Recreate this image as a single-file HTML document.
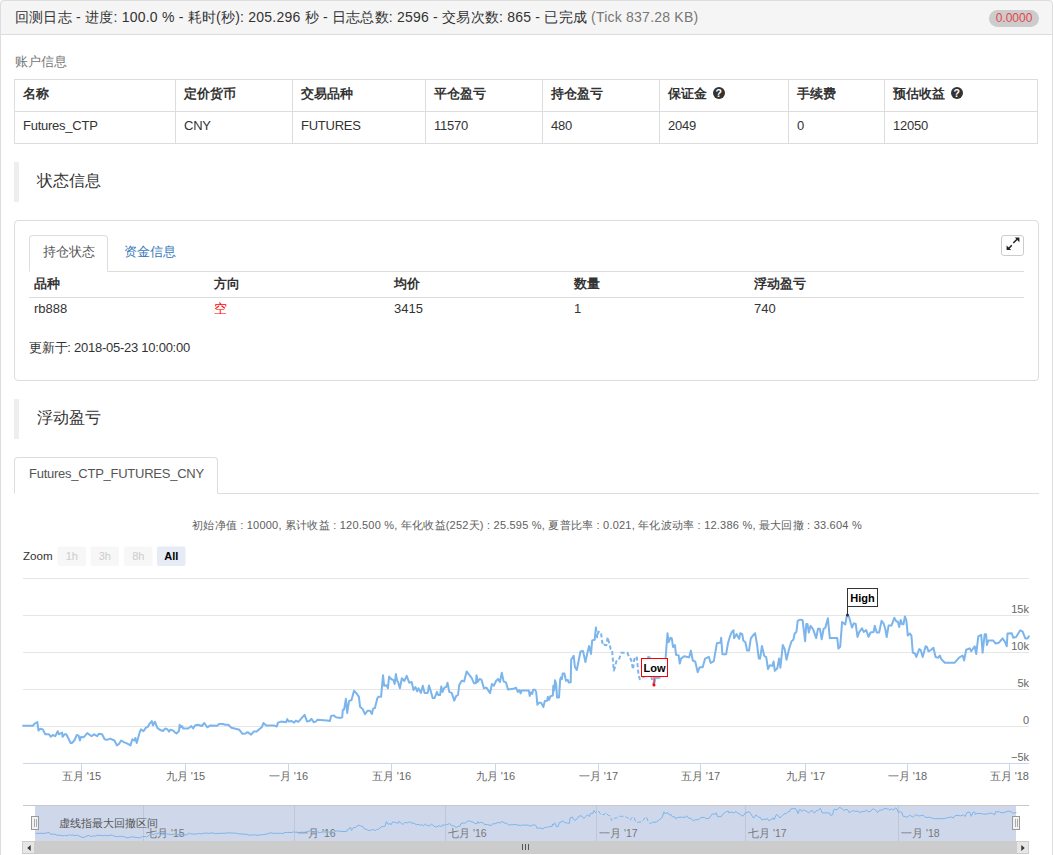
<!DOCTYPE html>
<html><head><meta charset="utf-8">
<style>
*{box-sizing:border-box;margin:0;padding:0}
html,body{width:1053px;height:855px;overflow:hidden;background:#fff}
body{font-family:"Liberation Sans",sans-serif;font-size:14px;color:#333;position:relative}
.a{position:absolute;white-space:nowrap}
#outer{position:absolute;left:0;top:0;width:1053px;height:900px;border:1px solid #ddd;border-radius:4px}
#head{position:absolute;left:0;top:0;width:1053px;height:35px;background:#f5f5f5;border:1px solid #ddd;border-radius:4px 4px 0 0}
.badge{position:absolute;left:989px;top:10px;width:50px;height:17px;border-radius:9px;background:#ccc;color:#e4464a;font-size:12px;line-height:17px;text-align:center}
.th{font-size:13px;line-height:16px;font-weight:bold;color:#333}
.td{font-size:13px;line-height:16px;color:#333;letter-spacing:-0.25px}
.bq{position:absolute;left:14px;width:5px;height:40px;background:#eee}
.h4{font-size:16px;color:#333}
#st{position:absolute;left:14px;top:220px;width:1025px;height:161px;border:1px solid #ddd;border-radius:4px}
.tab{position:absolute;border:1px solid #ddd;border-bottom-color:#fff;border-radius:4px 4px 0 0;background:#fff}
.ln{position:absolute;height:1px;background:#ddd}
.q{display:inline-block;width:12px;height:12px;border-radius:50%;background:#333;color:#fff;font-size:10.5px;line-height:12px;text-align:center;font-weight:bold;vertical-align:1.5px;margin-left:2px}
</style></head><body>
<div id="outer"></div>
<div id="head"></div>
<div class="a" style="left:15px;top:8px;font-size:14px;line-height:18px;color:#333;letter-spacing:0.22px">回测日志 - 进度: 100.0 % - 耗时(秒): 205.296 秒 - 日志总数: 2596 - 交易次数: 865 - 已完成 <span style="color:#777">(Tick 837.28 KB)</span></div>
<div class="badge">0.0000</div>

<div class="a" style="left:15px;top:53px;font-size:12.7px;line-height:18px;color:#777">账户信息</div>
<div class="a" style="left:14px;top:79px;width:1024px;height:65px;border:1px solid #ddd"></div>
<div class="ln" style="left:14px;top:111px;width:1024px"></div>
<div class="a" style="left:175px;top:79px;width:1px;height:65px;background:#ddd"></div>
<div class="a" style="left:292px;top:79px;width:1px;height:65px;background:#ddd"></div>
<div class="a" style="left:425px;top:79px;width:1px;height:65px;background:#ddd"></div>
<div class="a" style="left:542px;top:79px;width:1px;height:65px;background:#ddd"></div>
<div class="a" style="left:659px;top:79px;width:1px;height:65px;background:#ddd"></div>
<div class="a" style="left:788px;top:79px;width:1px;height:65px;background:#ddd"></div>
<div class="a" style="left:884px;top:79px;width:1px;height:65px;background:#ddd"></div>
<div class="a th" style="left:23px;top:86px">名称</div>
<div class="a td" style="left:23px;top:118px">Futures_CTP</div>
<div class="a th" style="left:184px;top:86px">定价货币</div>
<div class="a td" style="left:184px;top:118px">CNY</div>
<div class="a th" style="left:301px;top:86px">交易品种</div>
<div class="a td" style="left:301px;top:118px">FUTURES</div>
<div class="a th" style="left:434px;top:86px">平仓盈亏</div>
<div class="a td" style="left:434px;top:118px">11570</div>
<div class="a th" style="left:551px;top:86px">持仓盈亏</div>
<div class="a td" style="left:551px;top:118px">480</div>
<div class="a th" style="left:668px;top:86px">保证金 <span class="q">?</span></div>
<div class="a td" style="left:668px;top:118px">2049</div>
<div class="a th" style="left:797px;top:86px">手续费</div>
<div class="a td" style="left:797px;top:118px">0</div>
<div class="a th" style="left:893px;top:86px">预估收益 <span class="q">?</span></div>
<div class="a td" style="left:893px;top:118px">12050</div>

<div class="bq" style="top:162px"></div>
<div class="a h4" style="left:37px;top:172px;line-height:18px">状态信息</div>

<div id="st"></div>
<div class="ln" style="left:29px;top:271px;width:995px"></div>
<div class="tab" style="left:29px;top:235px;width:79px;height:37px"></div>
<div class="a" style="left:43px;top:244px;font-size:13px;line-height:16px;color:#555">持仓状态</div>
<div class="a" style="left:124px;top:244px;font-size:13px;line-height:16px;color:#337ab7">资金信息</div>
<div class="a" style="left:1001px;top:235px;width:23px;height:21px;border:1px solid #ccc;border-radius:3px;background:#fff"></div>
<svg class="a" style="left:1001px;top:235px" width="23" height="21" viewBox="1001 235 23 21"><path d="M1013.3 243 L1017.3 239 M1011.8 245.2 L1008.3 248.7" stroke="#222" stroke-width="1.5" fill="none"/><path d="M1014.8 237.6 H1019.4 V242.2 Z M1006.6 245.4 V250 H1011.2 Z" fill="#222"/></svg>

<div class="a" style="left:34px;top:276px;font-size:13px;font-weight:bold;line-height:16px">品种</div>
<div class="a" style="left:214px;top:276px;font-size:13px;font-weight:bold;line-height:16px">方向</div>
<div class="a" style="left:394px;top:276px;font-size:13px;font-weight:bold;line-height:16px">均价</div>
<div class="a" style="left:574px;top:276px;font-size:13px;font-weight:bold;line-height:16px">数量</div>
<div class="a" style="left:754px;top:276px;font-size:13px;font-weight:bold;line-height:16px">浮动盈亏</div>
<div class="ln" style="left:29px;top:297px;width:995px"></div>
<div class="a" style="left:34px;top:301px;font-size:13px;line-height:16px">rb888</div>
<div class="a" style="left:214px;top:301px;font-size:13px;line-height:16px;color:#f00">空</div>
<div class="a" style="left:394px;top:301px;font-size:13px;line-height:16px">3415</div>
<div class="a" style="left:574px;top:301px;font-size:13px;line-height:16px">1</div>
<div class="a" style="left:754px;top:301px;font-size:13px;line-height:16px">740</div>
<div class="a" style="left:29px;top:340px;font-size:13px;line-height:16px;letter-spacing:-0.25px">更新于: 2018-05-23 10:00:00</div>

<div class="bq" style="top:399px"></div>
<div class="a h4" style="left:37px;top:409px;line-height:18px">浮动盈亏</div>

<div class="ln" style="left:14px;top:493px;width:1025px"></div>
<div class="tab" style="left:14px;top:457px;width:204px;height:37px"></div>
<div class="a" style="left:29px;top:466px;font-size:13px;line-height:16px;color:#555;letter-spacing:-0.25px">Futures_CTP_FUTURES_CNY</div>

<svg class="a" style="left:0;top:0" width="1053" height="855" viewBox="0 0 1053 855" font-family="Liberation Sans, sans-serif">
<text x="527" y="529" font-size="11" fill="#606060" text-anchor="middle" letter-spacing="0.22">初始净值 : 10000, 累计收益 : 120.500 %, 年化收益(252天) : 25.595 %, 夏普比率 : 0.021, 年化波动率 : 12.386 %, 最大回撤 : 33.604 %</text>
<text x="23" y="560" font-size="11.6" fill="#333">Zoom</text>
<rect x="57.5" y="546.5" width="28.5" height="19.5" rx="2" fill="#f7f7f7"/>
<text x="71.75" y="560" font-size="11" fill="#ccc" text-anchor="middle">1h</text>
<rect x="90.5" y="546.5" width="28.5" height="19.5" rx="2" fill="#f7f7f7"/>
<text x="104.75" y="560" font-size="11" fill="#ccc" text-anchor="middle">3h</text>
<rect x="124" y="546.5" width="28.5" height="19.5" rx="2" fill="#f7f7f7"/>
<text x="138.25" y="560" font-size="11" fill="#ccc" text-anchor="middle">8h</text>
<rect x="157" y="546.5" width="28.5" height="19.5" rx="2" fill="#e6ebf5"/>
<text x="171.25" y="560" font-size="11" fill="#000" font-weight="bold" text-anchor="middle">All</text>
<rect x="23" y="578.0" width="1006" height="1" fill="#e6e6e6"/>
<rect x="23" y="615.0" width="1006" height="1" fill="#e6e6e6"/>
<rect x="23" y="652.0" width="1006" height="1" fill="#e6e6e6"/>
<rect x="23" y="689.0" width="1006" height="1" fill="#e6e6e6"/>
<rect x="23" y="726.0" width="1006" height="1" fill="#e6e6e6"/>
<text x="1029" y="613.3" font-size="11" fill="#666" text-anchor="end">15k</text>
<text x="1029" y="650.3" font-size="11" fill="#666" text-anchor="end">10k</text>
<text x="1029" y="687.3" font-size="11" fill="#666" text-anchor="end">5k</text>
<text x="1029" y="724.3" font-size="11" fill="#666" text-anchor="end">0</text>
<text x="1029" y="761.3" font-size="11" fill="#666" text-anchor="end">−5k</text>
<rect x="23" y="763" width="1006" height="1" fill="#ccd6eb"/>
<rect x="81" y="763" width="1" height="8" fill="#ccd6eb"/>
<text x="81.5" y="780" font-size="11" fill="#666" text-anchor="middle">五月 '15</text>
<rect x="185" y="763" width="1" height="8" fill="#ccd6eb"/>
<text x="185.5" y="780" font-size="11" fill="#666" text-anchor="middle">九月 '15</text>
<rect x="288" y="763" width="1" height="8" fill="#ccd6eb"/>
<text x="288.5" y="780" font-size="11" fill="#666" text-anchor="middle">一月 '16</text>
<rect x="391" y="763" width="1" height="8" fill="#ccd6eb"/>
<text x="391.5" y="780" font-size="11" fill="#666" text-anchor="middle">五月 '16</text>
<rect x="495" y="763" width="1" height="8" fill="#ccd6eb"/>
<text x="495.5" y="780" font-size="11" fill="#666" text-anchor="middle">九月 '16</text>
<rect x="598" y="763" width="1" height="8" fill="#ccd6eb"/>
<text x="598.5" y="780" font-size="11" fill="#666" text-anchor="middle">一月 '17</text>
<rect x="700" y="763" width="1" height="8" fill="#ccd6eb"/>
<text x="700.5" y="780" font-size="11" fill="#666" text-anchor="middle">五月 '17</text>
<rect x="805" y="763" width="1" height="8" fill="#ccd6eb"/>
<text x="805.5" y="780" font-size="11" fill="#666" text-anchor="middle">九月 '17</text>
<rect x="907" y="763" width="1" height="8" fill="#ccd6eb"/>
<text x="907.5" y="780" font-size="11" fill="#666" text-anchor="middle">一月 '18</text>
<rect x="1009" y="763" width="1" height="8" fill="#ccd6eb"/>
<text x="1029" y="780" font-size="11" fill="#666" text-anchor="end">五月 '18</text>
<path d="M23.1 725.7 L33.0 725.7 L34.8 723.5 L37.3 722.0 L38.5 730.6 L40.4 728.8 L42.8 729.4 L45.3 734.3 L49.0 734.3 L50.9 736.8 L52.7 735.0 L55.2 736.2 L57.7 731.2 L58.9 734.3 L62.0 732.5 L62.6 736.8 L64.4 734.3 L66.3 734.3 L70.6 743.0 L71.9 743.0 L74.3 740.5 L76.8 735.0 L78.6 735.6 L79.9 740.5 L81.1 736.8 L83.6 737.4 L87.3 733.1 L91.6 736.2 L94.1 734.3 L97.2 736.2 L99.0 733.7 L102.1 734.3 L104.6 739.3 L107.0 739.9 L110.1 738.6 L114.4 740.5 L116.9 745.4 L118.8 744.2 L121.2 740.5 L124.3 742.3 L127.4 743.6 L130.5 745.4 L132.3 739.3 L134.2 740.5 L135.4 738.0 L136.7 743.0 L139.8 731.9 L141.0 729.4 L143.5 731.2 L145.9 727.5 L147.5 727.3 L149.3 724.2 L151.8 721.1 L153.0 725.4 L154.9 721.7 L157.3 727.9 L159.8 729.8 L162.9 731.0 L165.4 728.5 L167.2 729.1 L169.1 731.6 L170.3 729.8 L173.4 730.6 L174.6 732.2 L176.5 733.5 L179.0 731.0 L179.6 724.8 L180.8 727.3 L182.0 726.0 L183.3 728.5 L188.2 728.5 L191.3 726.0 L193.1 728.5 L195.0 725.4 L198.1 724.8 L201.8 726.0 L204.3 723.0 L207.3 727.3 L210.4 725.4 L217.2 725.7 L219.1 724.0 L222.8 724.0 L225.2 724.8 L228.3 724.8 L231.4 727.7 L234.5 728.5 L239.4 729.8 L242.5 733.8 L245.6 733.5 L247.5 732.2 L251.2 734.7 L253.6 731.6 L256.7 731.6 L258.6 729.8 L261.7 727.3 L263.5 723.0 L266.0 725.4 L269.7 725.4 L274.3 725.6 L276.8 726.5 L278.0 722.6 L281.1 721.6 L286.0 722.2 L287.3 719.1 L288.5 721.4 L291.6 721.0 L294.1 722.6 L295.9 720.6 L298.4 721.9 L302.1 717.7 L304.6 714.8 L307.0 721.4 L309.5 721.0 L311.4 718.9 L313.8 722.2 L315.7 721.6 L317.5 719.8 L326.8 720.4 L329.9 721.0 L331.1 716.0 L333.6 715.4 L336.0 717.3 L340.4 717.9 L342.2 717.3 L342.8 709.9 L344.1 709.5 L345.9 698.8 L347.2 713.0 L349.0 701.2 L351.5 700.0 L354.0 690.7 L356.4 693.2 L358.9 696.9 L360.1 706.8 L362.6 709.0 L365.1 714.2 L367.5 710.7 L370.0 710.7 L371.9 714.0 L373.1 708.6 L374.9 708.0 L377.4 698.1 L378.6 696.7 L381.1 696.7 L383.0 675.3 L384.2 685.8 L386.7 685.2 L387.9 688.3 L389.1 676.5 L391.0 679.0 L393.5 680.2 L394.7 684.0 L395.9 674.1 L397.2 680.9 L398.1 682.0 L399.9 688.2 L401.8 678.3 L404.3 681.0 L406.7 675.9 L409.2 682.7 L411.7 682.0 L413.5 690.1 L415.4 687.0 L417.2 691.3 L418.5 688.2 L420.9 692.9 L422.8 685.7 L424.6 692.9 L427.7 692.9 L429.0 685.5 L430.2 689.4 L432.7 698.1 L434.5 698.1 L437.0 691.9 L438.2 695.0 L440.1 695.0 L441.3 686.4 L442.5 691.9 L444.4 687.6 L446.2 687.0 L447.5 682.7 L449.3 691.9 L451.8 693.1 L454.3 700.6 L456.1 696.2 L458.0 695.0 L459.2 685.1 L461.7 680.8 L464.1 681.4 L466.6 671.5 L469.1 674.6 L471.5 677.7 L474.0 683.3 L475.9 683.3 L476.5 675.2 L477.7 682.0 L479.6 679.0 L481.4 679.6 L483.9 688.2 L486.4 687.6 L490.1 693.1 L491.9 683.9 L493.8 685.7 L496.2 680.8 L498.1 679.0 L499.9 682.0 L501.8 672.8 L503.6 681.4 L506.1 682.7 L508.0 689.4 L513.5 688.8 L516.0 687.6 L517.8 691.9 L519.7 690.1 L520.6 693.4 L521.7 690.5 L528.8 690.5 L529.7 695.9 L531.1 692.2 L532.3 693.9 L533.1 689.7 L535.1 689.7 L536.2 692.2 L537.4 704.8 L538.8 702.8 L541.1 702.8 L543.4 707.0 L544.8 701.1 L547.1 700.8 L547.9 696.8 L549.1 699.9 L550.5 696.2 L552.8 695.6 L553.3 685.7 L554.2 690.5 L555.0 680.3 L556.2 684.2 L557.0 697.4 L559.0 697.4 L560.2 679.1 L561.0 677.4 L561.9 679.1 L562.7 673.4 L564.4 673.4 L565.9 680.8 L567.9 680.0 L568.7 682.5 L570.7 682.3 L571.2 659.5 L573.7 655.8 L574.9 666.9 L576.8 670.0 L580.5 651.5 L583.0 650.9 L585.4 662.0 L587.3 653.3 L589.1 645.9 L591.0 654.0 L592.2 640.4 L594.7 639.8 L595.9 627.4" fill="none" stroke="#7cb5ec" stroke-width="2" stroke-linejoin="round" stroke-linecap="round"/>
<path d="M595.9 627.4 L597.2 637.3 L598.4 631.7 L600.9 632.3 L602.7 645.3 L604.0 644.7 L606.4 645.3 L607.7 637.3 L608.9 642.2 L610.7 649.0 L612.0 649.6 L613.8 670.6 L615.1 666.9 L616.3 661.4 L618.8 660.1 L621.2 652.7 L627.4 652.7 L629.3 657.7 L631.1 659.5 L633.0 669.4 L634.2 659.5 L636.7 656.4 L638.5 674.3 L639.8 679.3 L641.6 678.1 L645.0 676.0 L648.6 655.2 L649.8 657.7 L651.4 677.3 L653.9 685.1" fill="none" stroke="#7cb5ec" stroke-width="2" stroke-dasharray="4,2.5" stroke-linejoin="round"/>
<path d="M653.9 685.1 L655.5 678.1 L659.6 677.7 L665.6 658.0 L667.5 633.3 L668.7 642.0 L670.6 637.7 L671.8 638.3 L673.0 646.9 L674.9 645.1 L676.1 654.9 L678.6 655.3 L679.8 663.6 L681.1 658.6 L684.1 656.2 L686.6 656.8 L689.1 657.4 L690.9 650.6 L692.8 660.5 L695.3 661.7 L697.7 672.2 L699.6 667.3 L702.7 667.3 L705.1 658.6 L708.8 656.8 L710.7 663.0 L713.8 661.1 L716.9 643.2 L720.6 642.6 L721.2 637.7 L722.4 654.3 L726.1 654.3 L728.0 643.2 L729.8 637.0 L731.7 632.1 L733.5 630.2 L734.1 638.3 L736.6 634.0 L739.1 638.9 L740.3 633.3 L742.2 634.0 L743.4 640.7 L745.3 642.0 L747.1 650.6 L749.0 650.6 L750.8 638.3 L752.7 635.8 L755.1 633.3 L757.0 644.4 L758.8 658.6 L760.1 658.6 L761.9 646.1 L764.3 656.0 L766.2 657.2 L768.0 669.0 L769.9 665.2 L772.3 665.9 L773.6 661.5 L774.8 670.8 L777.3 668.3 L779.1 658.5 L780.4 667.7 L782.8 644.9 L784.7 649.2 L786.5 659.7 L789.0 649.2 L791.5 641.2 L793.3 639.9 L794.6 633.8 L796.4 631.9 L797.7 620.8 L800.1 619.6 L802.6 620.2 L805.1 641.2 L806.3 623.9 L807.5 623.9 L808.8 632.5 L810.6 625.7 L813.1 629.4 L816.2 638.1 L818.0 628.8 L819.9 628.8 L821.7 639.3 L823.6 628.8 L825.4 627.6 L827.9 618.3 L829.8 638.1 L837.2 638.1 L838.4 648.6 L840.2 646.7 L842.1 622.0 L845.2 624.5 L847.0 615.2 L848.9 616.5 L852.0 627.6 L853.8 623.3 L855.7 623.9 L857.5 636.9 L859.4 631.9 L861.9 628.2 L863.7 631.9 L866.2 630.1 L868.6 636.9 L870.5 632.5 L873.6 631.9 L874.8 625.7 L876.7 632.5 L879.1 632.5 L881.6 620.8 L883.5 623.3 L885.3 628.8 L886.7 637.0 L888.6 625.6 L891.4 625.6 L894.3 617.8 L896.4 621.4 L897.8 621.4 L899.2 627.0 L900.7 619.9 L902.1 624.2 L903.5 624.2 L904.9 616.4 L906.4 620.6 L907.8 635.6 L909.9 633.5 L911.4 635.6 L912.8 652.7 L914.9 653.4 L916.3 657.0 L919.2 649.1 L920.6 649.8 L922.7 657.0 L925.6 646.3 L927.0 647.0 L928.4 651.3 L931.3 649.8 L933.4 647.7 L935.6 657.0 L938.4 657.7 L939.8 655.5 L941.3 659.1 L944.8 662.7 L954.8 662.7 L959.1 657.7 L962.6 655.5 L964.1 660.5 L966.2 649.8 L969.8 648.4 L971.2 651.3 L974.7 646.3 L976.2 654.1 L978.3 636.3 L981.2 634.9 L982.6 652.7 L984.7 634.2 L986.1 634.2 L986.9 644.9 L988.3 640.6 L993.3 640.6 L995.4 643.4 L999.0 642.7 L1002.5 638.4 L1004.7 641.3 L1006.8 646.3 L1007.5 633.5 L1011.8 633.2 L1013.2 637.7 L1016.1 637.0 L1020.3 630.3 L1022.5 631.3 L1025.3 638.4 L1027.5 638.4 L1028.9 636.3" fill="none" stroke="#7cb5ec" stroke-width="2" stroke-linejoin="round" stroke-linecap="round"/>
<path d="M847.5 606.5 L847.5 615" stroke="#333" stroke-width="1"/>
<circle cx="847.5" cy="615" r="1.5" fill="#333"/>
<rect x="847.5" y="588.5" width="30" height="18" fill="#fff" stroke="#333" stroke-width="1"/>
<text x="862.5" y="601.5" font-size="11" font-weight="bold" fill="#000" text-anchor="middle">High</text>
<path d="M654 676.5 L654 685" stroke="#f00" stroke-width="1"/>
<circle cx="654" cy="685" r="1.5" fill="#f00"/>
<rect x="641.5" y="658.5" width="26" height="18" fill="#fff" stroke="#f00" stroke-width="1"/>
<text x="654.5" y="671.5" font-size="11" font-weight="bold" fill="#000" text-anchor="middle">Low</text>
<rect x="35" y="805" width="981" height="36" fill="#cfd8ea"/>
<rect x="23" y="805" width="1006" height="1" fill="#c8c8c8"/>
<rect x="143" y="805" width="1" height="36" fill="#bfc6d6"/>
<text x="146" y="837" font-size="10.5" fill="#777">七月 '15</text>
<rect x="294" y="805" width="1" height="36" fill="#bfc6d6"/>
<text x="297" y="837" font-size="10.5" fill="#777">一月 '16</text>
<rect x="445" y="805" width="1" height="36" fill="#bfc6d6"/>
<text x="448" y="837" font-size="10.5" fill="#777">七月 '16</text>
<rect x="596" y="805" width="1" height="36" fill="#bfc6d6"/>
<text x="599" y="837" font-size="10.5" fill="#777">一月 '17</text>
<rect x="745" y="805" width="1" height="36" fill="#bfc6d6"/>
<text x="748" y="837" font-size="10.5" fill="#777">七月 '17</text>
<rect x="898" y="805" width="1" height="36" fill="#bfc6d6"/>
<text x="901" y="837" font-size="10.5" fill="#777">一月 '18</text>
<path d="M35.6 833.3 L45.3 833.3 L47.0 832.8 L49.4 832.5 L50.6 834.5 L52.5 834.1 L54.8 834.2 L57.2 835.3 L60.9 835.3 L62.7 835.9 L64.5 835.5 L66.9 835.8 L69.3 834.6 L70.5 835.3 L73.5 834.9 L74.1 835.9 L75.9 835.3 L77.7 835.3 L81.9 837.4 L83.2 837.4 L85.5 836.8 L88.0 835.5 L89.7 835.6 L91.0 836.8 L92.2 835.9 L94.6 836.1 L98.2 835.1 L102.4 835.8 L104.8 835.3 L107.9 835.8 L109.6 835.2 L112.6 835.3 L115.1 836.5 L117.4 836.6 L120.4 836.3 L124.6 836.8 L127.1 837.9 L128.9 837.6 L131.3 836.8 L134.3 837.2 L137.3 837.5 L140.3 837.9 L142.1 836.5 L143.9 836.8 L145.1 836.2 L146.4 837.4 L149.4 834.8 L150.6 834.2 L153.0 834.6 L155.3 833.7 L156.9 833.7 L158.7 833.0 L161.1 832.3 L162.3 833.3 L164.1 832.4 L166.5 833.8 L168.9 834.3 L171.9 834.6 L174.4 834.0 L176.1 834.1 L178.0 834.7 L179.1 834.3 L182.2 834.5 L183.3 834.8 L185.2 835.1 L187.6 834.6 L188.2 833.1 L189.4 833.7 L190.5 833.4 L191.8 834.0 L196.6 834.0 L199.6 833.4 L201.4 834.0 L203.2 833.3 L206.2 833.1 L209.8 833.4 L212.3 832.7 L215.2 833.7 L218.2 833.3 L224.9 833.3 L226.7 832.9 L230.3 832.9 L232.7 833.1 L235.7 833.1 L238.7 833.8 L241.7 834.0 L246.5 834.3 L249.5 835.2 L252.6 835.1 L254.4 834.8 L258.0 835.4 L260.4 834.7 L263.4 834.7 L265.2 834.3 L268.3 833.7 L270.0 832.7 L272.4 833.3 L276.1 833.3 L280.5 833.3 L283.0 833.5 L284.2 832.6 L287.2 832.4 L292.0 832.5 L293.2 831.8 L294.4 832.3 L297.4 832.2 L299.8 832.6 L301.6 832.1 L304.0 832.4 L307.7 831.5 L310.1 830.8 L312.4 832.3 L314.9 832.2 L316.7 831.7 L319.1 832.5 L320.9 832.4 L322.7 832.0 L331.7 832.1 L334.8 832.2 L335.9 831.1 L338.4 830.9 L340.7 831.4 L345.0 831.5 L346.8 831.4 L347.3 829.6 L348.6 829.6 L350.4 827.1 L351.6 830.4 L353.4 827.6 L355.8 827.3 L358.3 825.2 L360.6 825.8 L363.0 826.6 L364.2 828.9 L366.6 829.4 L369.1 830.7 L371.4 829.8 L373.9 829.8 L375.7 830.6 L376.9 829.3 L378.6 829.2 L381.1 826.9 L382.2 826.6 L384.7 826.6 L386.5 821.6 L387.7 824.0 L390.1 823.9 L391.3 824.6 L392.5 821.9 L394.3 822.4 L396.8 822.7 L397.9 823.6 L399.1 821.3 L400.4 822.9 L401.3 823.1 L403.0 824.6 L404.9 822.3 L407.3 822.9 L409.6 821.7 L412.1 823.3 L414.5 823.1 L416.3 825.0 L418.1 824.3 L419.9 825.3 L421.2 824.6 L423.5 825.7 L425.3 824.0 L427.1 825.7 L430.1 825.7 L431.4 824.0 L432.6 824.9 L435.0 826.9 L436.8 826.9 L439.2 825.5 L440.4 826.2 L442.2 826.2 L443.4 824.2 L444.6 825.5 L446.4 824.5 L448.2 824.3 L449.4 823.3 L451.2 825.5 L453.6 825.7 L456.1 827.5 L457.8 826.5 L459.7 826.2 L460.8 823.9 L463.3 822.9 L465.6 823.0 L468.1 820.7 L470.5 821.4 L472.8 822.1 L475.3 823.5 L477.1 823.5 L477.7 821.6 L478.9 823.1 L480.7 822.4 L482.5 822.6 L484.9 824.6 L487.4 824.5 L491.0 825.7 L492.7 823.6 L494.6 824.0 L496.9 822.9 L498.8 822.4 L500.5 823.1 L502.4 821.0 L504.1 823.0 L506.6 823.3 L508.4 824.9 L513.8 824.7 L516.2 824.5 L518.0 825.5 L519.8 825.0 L520.7 825.8 L521.8 825.1 L528.7 825.1 L529.6 826.4 L530.9 825.5 L532.1 825.9 L532.9 824.9 L534.8 824.9 L535.9 825.5 L537.1 828.5 L538.5 828.0 L540.7 828.0 L542.9 829.0 L544.3 827.6 L546.5 827.5 L547.3 826.6 L548.5 827.3 L549.9 826.5 L552.1 826.3 L552.6 824.0 L553.5 825.1 L554.3 822.8 L555.4 823.7 L556.2 826.7 L558.2 826.7 L559.3 822.5 L560.1 822.1 L561.0 822.5 L561.8 821.1 L563.4 821.1 L564.9 822.9 L566.8 822.7 L567.6 823.3 L569.6 823.2 L570.0 817.9 L572.5 817.0 L573.7 819.6 L575.5 820.4 L579.1 816.0 L581.6 815.9 L583.9 818.5 L585.7 816.5 L587.5 814.7 L589.4 816.6 L590.5 813.5 L593.0 813.3 L594.1 810.4" fill="none" stroke="#7cb5ec" stroke-width="1"/>
<path d="M594.1 810.4 L595.4 812.7 L596.6 811.4 L599.0 811.6 L600.8 814.6 L602.0 814.5 L604.4 814.6 L605.6 812.7 L606.8 813.9 L608.6 815.5 L609.8 815.6 L611.6 820.5 L612.9 819.6 L614.0 818.3 L616.5 818.0 L618.8 816.3 L624.9 816.3 L626.7 817.5 L628.5 817.9 L630.3 820.2 L631.5 817.9 L633.9 817.2 L635.7 821.4 L636.9 822.5 L638.7 822.2 L642.0 821.8 L645.5 816.9 L646.7 817.5 L648.3 822.1 L650.7 823.9" fill="none" stroke="#7cb5ec" stroke-width="1" stroke-dasharray="4,2"/>
<path d="M650.7 823.9 L652.3 822.2 L656.2 822.1 L662.1 817.6 L664.0 811.8 L665.1 813.8 L667.0 812.8 L668.1 813.0 L669.3 815.0 L671.2 814.6 L672.3 816.8 L674.8 816.9 L675.9 818.9 L677.2 817.7 L680.1 817.1 L682.6 817.3 L685.0 817.4 L686.8 815.8 L688.6 818.1 L691.1 818.4 L693.4 820.9 L695.3 819.7 L698.3 819.7 L700.6 817.7 L704.2 817.3 L706.1 818.7 L709.1 818.3 L712.1 814.1 L715.7 814.0 L716.3 812.8 L717.5 816.7 L721.1 816.7 L722.9 814.1 L724.7 812.7 L726.6 811.5 L728.3 811.1 L728.9 813.0 L731.3 812.0 L733.8 813.1 L734.9 811.8 L736.8 812.0 L738.0 813.5 L739.8 813.8 L741.6 815.8 L743.4 815.8 L745.2 813.0 L747.0 812.4 L749.4 811.8 L751.2 814.4 L753.0 817.7 L754.2 817.7 L756.0 814.8 L758.3 817.1 L760.2 817.4 L761.9 820.1 L763.8 819.2 L766.1 819.4 L767.4 818.4 L768.6 820.5 L771.0 820.0 L772.8 817.7 L774.0 819.8 L776.4 814.5 L778.2 815.5 L780.0 818.0 L782.4 815.5 L784.9 813.6 L786.6 813.3 L787.9 811.9 L789.6 811.5 L790.9 808.9 L793.3 808.6 L795.7 808.7 L798.1 813.6 L799.3 809.6 L800.5 809.6 L801.7 811.6 L803.5 810.0 L805.9 810.9 L808.9 812.9 L810.7 810.8 L812.6 810.8 L814.3 813.2 L816.2 810.8 L817.9 810.5 L820.4 808.3 L822.2 812.9 L829.4 812.9 L830.6 815.4 L832.4 814.9 L834.2 809.2 L837.2 809.8 L839.0 807.6 L840.8 807.9 L843.9 810.5 L845.6 809.5 L847.5 809.6 L849.2 812.6 L851.1 811.5 L853.5 810.6 L855.3 811.5 L857.7 811.1 L860.0 812.6 L861.9 811.6 L864.9 811.5 L866.1 810.0 L867.9 811.6 L870.3 811.6 L872.7 808.9 L874.6 809.5 L876.3 810.8 L877.7 812.7 L879.5 810.0 L882.3 810.0 L885.1 808.2 L887.2 809.0 L888.5 809.0 L889.9 810.3 L891.3 808.7 L892.7 809.7 L894.1 809.7 L895.4 807.9 L896.9 808.8 L898.3 812.3 L900.3 811.8 L901.8 812.3 L903.1 816.3 L905.2 816.5 L906.6 817.3 L909.4 815.5 L910.7 815.6 L912.8 817.3 L915.6 814.8 L917.0 815.0 L918.4 816.0 L921.2 815.6 L923.2 815.2 L925.4 817.3 L928.1 817.5 L929.5 817.0 L930.9 817.8 L934.3 818.7 L944.1 818.7 L948.3 817.5 L951.7 817.0 L953.2 818.1 L955.2 815.6 L958.7 815.3 L960.1 816.0 L963.5 814.8 L965.0 816.6 L967.0 812.5 L969.8 812.2 L971.2 816.3 L973.3 812.0 L974.6 812.0 L975.4 814.5 L976.8 813.5 L981.6 813.5 L983.7 814.2 L987.2 814.0 L990.6 813.0 L992.8 813.7 L994.8 814.8 L995.5 811.8 L999.7 811.8 L1001.0 812.8 L1003.9 812.7 L1008.0 811.1 L1010.1 811.3 L1012.8 813.0 L1015.0 813.0 L1016.4 812.5" fill="none" stroke="#7cb5ec" stroke-width="1"/>
<text x="59" y="826.5" font-size="10.7" fill="#555">虚线指最大回撤区间</text>
<rect x="31.5" y="816.5" width="7" height="13" fill="#f2f2f2" stroke="#999" stroke-width="1"/>
<path d="M34.5 819 V827 M36.5 819 V827" stroke="#aaa" stroke-width="1"/>
<rect x="1012.5" y="816.5" width="7" height="13" fill="#f2f2f2" stroke="#999" stroke-width="1"/>
<path d="M1015.5 819 V827 M1017.5 819 V827" stroke="#aaa" stroke-width="1"/>
<rect x="23" y="841" width="1006" height="13" fill="#f2f2f2"/>
<rect x="35" y="841" width="981" height="13" fill="#cccccc"/>
<rect x="22.5" y="841.5" width="12" height="12" fill="#e6e6e6" stroke="#ccc" stroke-width="1"/>
<rect x="1016.5" y="841.5" width="12" height="12" fill="#e6e6e6" stroke="#ccc" stroke-width="1"/>
<path d="M27.3 848 L30.7 845 L30.7 851 Z" fill="#333"/>
<path d="M1024.7 848 L1021.3 845 L1021.3 851 Z" fill="#333"/>
<path d="M522.5 844 V850 M525.5 844 V850 M528.5 844 V850" stroke="#555" stroke-width="1"/>
</svg>
</body></html>
